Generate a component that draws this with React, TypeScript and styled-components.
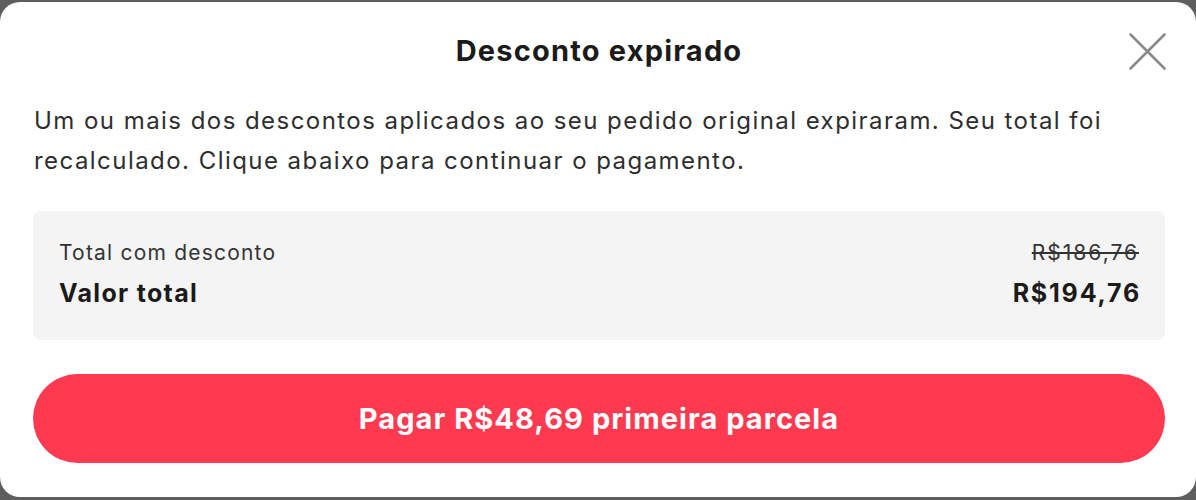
import React from "react";
import styled, { createGlobalStyle } from "styled-components";

const Global = createGlobalStyle`
  html, body { margin: 0; padding: 0; background: #5e5e5e; }
  body { font-family: Inter, "Noto Sans", sans-serif; }
  * { box-sizing: border-box; }
`;

const Modal = styled.div`
  margin-top: 2px;
  width: 1196px;
  height: 495px;
  background: #ffffff;
  border-radius: 20px;
  padding: 31px 31px 0 33px;
  display: flex;
  flex-direction: column;
`;

const Header = styled.div`
  position: relative;
  display: flex;
  justify-content: center;
  align-items: center;
  height: 36px;
`;

const Title = styled.h2`
  margin: 0;
  font-size: 29px;
  line-height: 36px;
  font-weight: 700;
  letter-spacing: 1.2px;
  color: #1b1b1b;
`;

const Close = styled.button`
  position: absolute;
  right: -1px;
  top: 0px;
  width: 37px;
  height: 37px;
  padding: 0;
  border: none;
  background: transparent;
  cursor: pointer;
  display: flex;
`;

const Message = styled.p`
  margin: 32px 0 0 1px;
  font-size: 24px;
  line-height: 40px;
  letter-spacing: 1.45px;
  color: #2e2e2e;
  font-weight: 400;
`;

const Summary = styled.div`
  margin-top: 30px;
  background: #f4f4f4;
  border-radius: 8px;
  height: 129px;
  padding: 28px 24px 0 26px;
  display: flex;
  flex-direction: column;
  gap: 10px;
`;

const Row = styled.div`
  display: flex;
  justify-content: space-between;
  align-items: center;
`;

const Label = styled.span<{ $strong?: boolean }>`
  font-size: ${(p) => (p.$strong ? "25px" : "21px")};
  line-height: ${(p) => (p.$strong ? "32px" : "28px")};
  font-weight: ${(p) => (p.$strong ? 700 : 400)};
  letter-spacing: ${(p) => (p.$strong ? "1.3px" : "1.2px")};
  color: ${(p) => (p.$strong ? "#1b1b1b" : "#333333")};
`;

const Amount = styled.span`
  font-size: 25px;
  line-height: 32px;
  font-weight: 700;
  letter-spacing: 1.8px;
  color: #1b1b1b;
`;

const OldPrice = styled.span`
  font-size: 21px;
  line-height: 28px;
  letter-spacing: 2px;
  margin-right: 2px;
  color: #333333;
  text-decoration: line-through;
`;

const PayButton = styled.button`
  margin-top: 34px;
  height: 89px;
  width: 100%;
  border: none;
  border-radius: 45px;
  background: #ff3a50;
  color: #ffffff;
  font-family: Inter, "Noto Sans", sans-serif;
  font-size: 29px;
  font-weight: 700;
  letter-spacing: 1.05px;
  cursor: pointer;
`;

export default function App() {
  return (
    <>
      <Global />
      <Modal>
        <Header>
          <Title>Desconto expirado</Title>
          <Close aria-label="Fechar">
            <svg width="37" height="37" viewBox="0 0 37 37">
              <path
                d="M1.5 1.5 L35.5 35.5 M35.5 1.5 L1.5 35.5"
                stroke="#8a8a8a"
                strokeWidth="2.6"
                strokeLinecap="round"
                fill="none"
              />
            </svg>
          </Close>
        </Header>
        <Message>
          Um ou mais dos descontos aplicados ao seu pedido original expiraram. Seu total foi
          recalculado. Clique abaixo para continuar o pagamento.
        </Message>
        <Summary>
          <Row>
            <Label>Total com desconto</Label>
            <OldPrice>R$186,76</OldPrice>
          </Row>
          <Row>
            <Label $strong>Valor total</Label>
            <Amount>R$194,76</Amount>
          </Row>
        </Summary>
        <PayButton>Pagar R$48,69 primeira parcela</PayButton>
      </Modal>
    </>
  );
}
